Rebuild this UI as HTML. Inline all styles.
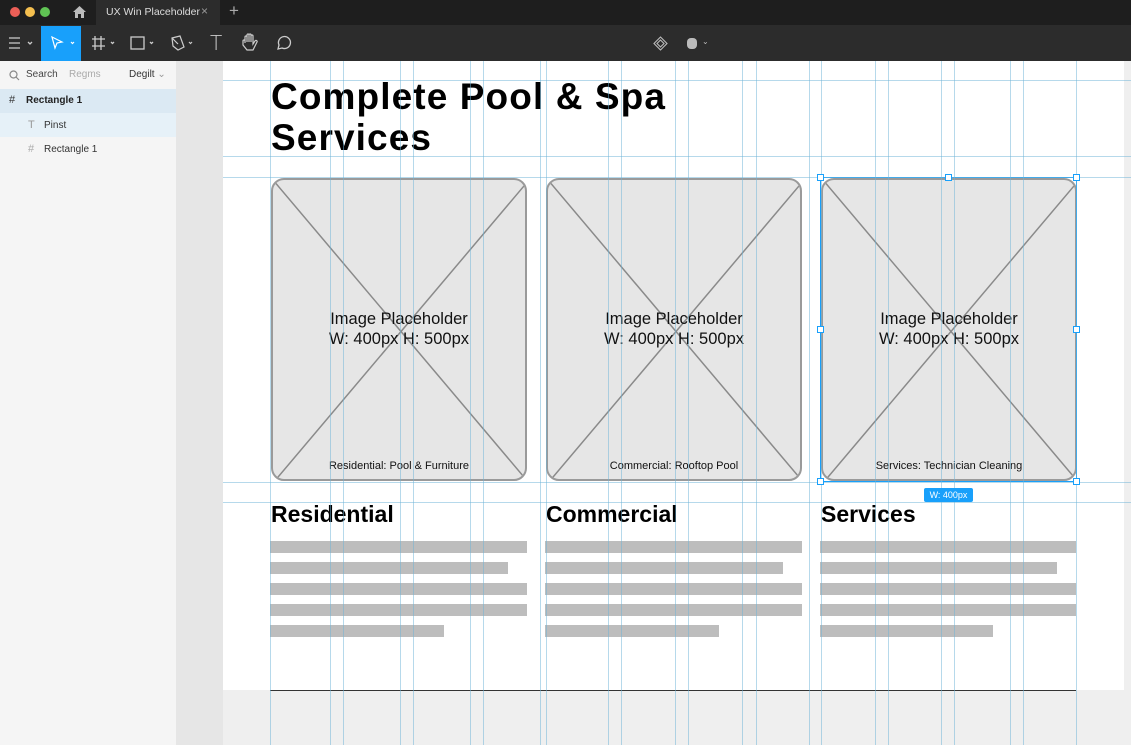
<!DOCTYPE html>
<html><head><meta charset="utf-8"><style>
*{margin:0;padding:0;box-sizing:border-box}
body{width:1131px;height:745px;overflow:hidden;position:relative;background:#efefef;font-family:"Liberation Sans",sans-serif}
.a{position:absolute}
.vl{position:absolute;top:61px;height:684px;width:1px;background:rgba(110,180,215,.5)}
.hl{position:absolute;left:223px;width:908px;height:1px;background:rgba(110,180,215,.5)}
.card{position:absolute;top:178px;width:256px;height:303px;background:#e6e6e6;border:2.5px solid #9a9a9a;border-radius:13px;overflow:hidden}
.card svg{position:absolute;left:0;top:0}
.ph{position:absolute;left:0;right:0;top:129px;text-align:center;font-size:16.5px;line-height:20px;color:#111}
.cap{position:absolute;left:0;right:0;bottom:7px;text-align:center;font-size:11px;color:#111}
.h2{position:absolute;top:501px;font-size:23px;font-weight:bold;color:#000}
.bar{position:absolute;height:12px;background:#bdbdbd}
</style></head><body>
<div class="a" style="left:0;top:0;width:1131px;height:25px;background:#1e1e1e"></div>
<div class="a" style="left:10px;top:7px;width:10px;height:10px;border-radius:50%;background:#ec5f57"></div>
<div class="a" style="left:25px;top:7px;width:10px;height:10px;border-radius:50%;background:#f4bf4f"></div>
<div class="a" style="left:40px;top:7px;width:10px;height:10px;border-radius:50%;background:#60c454"></div>
<svg class="a" style="left:72px;top:5px" width="15" height="14"><path d="M1 7L7.5 1 14 7H12V13H9V9H6V13H3V7Z" fill="#bbb"/></svg>
<div class="a" style="left:96px;top:0;width:124px;height:25px;background:#2c2c2c"></div>
<div class="a" style="left:106px;top:6px;font-size:10.5px;color:#ddd">UX Win Placeholder</div>
<div class="a" style="left:201px;top:4px;font-size:12px;color:#999">×</div>
<div class="a" style="left:229px;top:1px;font-size:17px;color:#aaa">+</div>
<div class="a" style="left:0;top:25px;width:1131px;height:36px;background:#2c2c2c"></div>
<svg class="a" style="left:8px;top:36px" width="26" height="14" fill="none" stroke="#ccc" stroke-width="1.3"><path d="M1 2H12M1 7H12M1 12H12M20 6L22 8 24 6"/></svg>
<div class="a" style="left:41px;top:26px;width:40px;height:35px;background:#18a0fb"></div>
<svg class="a" style="left:50px;top:36px" width="28" height="14" fill="none" stroke="#fff" stroke-width="1.2"><path d="M2 1L12 6 7 7 5 12Z M21 6L22.5 7.5 24 6"/></svg>
<svg class="a" style="left:91px;top:35px" width="28" height="16" fill="none" stroke="#ccc" stroke-width="1.3"><path d="M4 1V15M10 1V15M1 4H14M1 11H14M20 7L21.5 8.5 23 7"/></svg>
<svg class="a" style="left:130px;top:35px" width="28" height="16" fill="none" stroke="#ccc" stroke-width="1.3"><rect x="1" y="2" width="13" height="12"/><path d="M20 7L21.5 8.5 23 7"/></svg>
<svg class="a" style="left:170px;top:35px" width="28" height="16" fill="none" stroke="#ccc" stroke-width="1.2"><path d="M2 3L10 1 14 12 8 15 3 11Z M2 3L8 9M19 7L20.5 8.5 22 7"/></svg>
<div class="a" style="left:210px;top:31px;font-size:20px;color:#ccc;font-family:'DejaVu Sans',sans-serif;font-weight:200">T</div>
<svg class="a" style="left:241px;top:33px" width="18" height="19" fill="none" stroke="#ccc" stroke-width="1.2"><path d="M4 10V4a1 1 0 0 1 2 0V9V2a1 1 0 0 1 2 0V9V2a1 1 0 0 1 2 0V9V3a1 1 0 0 1 2 0V11L14 8a1 1 0 0 1 2 1L12 17H6L2 12V8a1 1 0 0 1 2 0"/></svg>
<svg class="a" style="left:275px;top:35px" width="18" height="17" fill="none" stroke="#ccc" stroke-width="1.3"><path d="M3 14L4 10A6 6 0 1 1 7 13Z"/></svg>
<svg class="a" style="left:653px;top:36px" width="15" height="15" fill="none" stroke="#bbb" stroke-width="1.1"><path d="M7.5 1L14 7.5 7.5 14 1 7.5Z M7.5 4L11 7.5 7.5 11 4 7.5Z"/></svg>
<div class="a" style="left:687px;top:38px;width:10px;height:11px;border-radius:4px;background:#bbb"></div>
<div class="a" style="left:702px;top:37px;font-size:8px;color:#bbb">⌄</div>
<div class="a" style="left:0;top:61px;width:176px;height:684px;background:#f5f5f5"></div>
<div class="a" style="left:176px;top:61px;width:47px;height:684px;background:#e6e6e6"></div>
<svg class="a" style="left:9px;top:70px" width="11" height="11" fill="none" stroke="#888" stroke-width="1.2"><circle cx="4.5" cy="4.5" r="3.5"/><path d="M7 7L10 10"/></svg>
<div class="a" style="left:26px;top:69px;font-size:10px;color:#444">Search</div>
<div class="a" style="left:69px;top:69px;font-size:10px;color:#aaa">Regms</div>
<div class="a" style="left:129px;top:69px;font-size:10px;color:#333">Degilt <span style="color:#999">⌄</span></div>
<div class="a" style="left:0;top:89px;width:176px;height:24px;background:#dbe9f3"></div>
<div class="a" style="left:0;top:113px;width:176px;height:24px;background:#e6f1f8"></div>
<div class="a" style="left:9px;top:94px;font-size:11px;color:#333">#</div>
<div class="a" style="left:26px;top:95px;font-size:10px;font-weight:bold;color:#222">Rectangle 1</div>
<div class="a" style="left:28px;top:119px;font-size:11px;color:#999">T</div>
<div class="a" style="left:44px;top:120px;font-size:10px;color:#333">Pinst</div>
<div class="a" style="left:28px;top:143px;font-size:11px;color:#aaa">#</div>
<div class="a" style="left:44px;top:144px;font-size:10px;color:#333">Rectangle 1</div>
<div class="a" style="left:223px;top:61px;width:901px;height:629px;background:#fff"></div>
<div class="a" style="left:270px;top:690px;width:806px;height:1px;background:#333"></div>
<div class="a" style="left:271px;top:76px;font-size:37px;line-height:41px;font-weight:bold;color:#000;letter-spacing:1.1px">Complete Pool &amp; Spa<br>Services</div>

<div class="card" style="left:271px"><svg width="256" height="303"><path d="M0 0L256 303M256 0L0 303" stroke="#8a8a8a" stroke-width="1.5"/></svg><div class="ph">Image Placeholder<br>W: 400px H: 500px</div><div class="cap">Residential: Pool &amp; Furniture</div></div>
<div class="card" style="left:546px"><svg width="256" height="303"><path d="M0 0L256 303M256 0L0 303" stroke="#8a8a8a" stroke-width="1.5"/></svg><div class="ph">Image Placeholder<br>W: 400px H: 500px</div><div class="cap">Commercial: Rooftop Pool</div></div>
<div class="card" style="left:821px"><svg width="256" height="303"><path d="M0 0L256 303M256 0L0 303" stroke="#8a8a8a" stroke-width="1.5"/></svg><div class="ph">Image Placeholder<br>W: 400px H: 500px</div><div class="cap">Services: Technician Cleaning</div></div>
<div class="a" style="left:820px;top:177px;width:257px;height:305px;border:1px solid #18a0fb"></div>

<div class="h2" style="left:271px">Residential</div>
<div class="h2" style="left:546px">Commercial</div>
<div class="h2" style="left:821px">Services</div>

<div class="bar" style="left:270px;top:541px;width:257px"></div><div class="bar" style="left:270px;top:562px;width:238px"></div><div class="bar" style="left:270px;top:583px;width:257px"></div><div class="bar" style="left:270px;top:604px;width:257px"></div><div class="bar" style="left:270px;top:625px;width:174px"></div>
<div class="bar" style="left:545px;top:541px;width:257px"></div><div class="bar" style="left:545px;top:562px;width:238px"></div><div class="bar" style="left:545px;top:583px;width:257px"></div><div class="bar" style="left:545px;top:604px;width:257px"></div><div class="bar" style="left:545px;top:625px;width:174px"></div>
<div class="bar" style="left:820px;top:541px;width:256px"></div><div class="bar" style="left:820px;top:562px;width:237px"></div><div class="bar" style="left:820px;top:583px;width:256px"></div><div class="bar" style="left:820px;top:604px;width:256px"></div><div class="bar" style="left:820px;top:625px;width:173px"></div>

<div class="vl" style="left:270px"></div><div class="vl" style="left:330px"></div><div class="vl" style="left:343px"></div><div class="vl" style="left:400px"></div><div class="vl" style="left:413px"></div><div class="vl" style="left:470px"></div><div class="vl" style="left:483px"></div><div class="vl" style="left:540px"></div><div class="vl" style="left:546px"></div><div class="vl" style="left:608px"></div><div class="vl" style="left:621px"></div><div class="vl" style="left:675px"></div><div class="vl" style="left:688px"></div><div class="vl" style="left:742px"></div><div class="vl" style="left:756px"></div><div class="vl" style="left:809px"></div><div class="vl" style="left:821px"></div><div class="vl" style="left:875px"></div><div class="vl" style="left:888px"></div><div class="vl" style="left:941px"></div><div class="vl" style="left:954px"></div><div class="vl" style="left:1010px"></div><div class="vl" style="left:1023px"></div><div class="vl" style="left:1076px"></div>
<div class="hl" style="top:80px"></div><div class="hl" style="top:156px"></div><div class="hl" style="top:177px"></div><div class="hl" style="top:482px"></div><div class="hl" style="top:502px"></div>

<div class="a" style="left:817px;top:174px;width:7px;height:7px;background:#fff;border:1px solid #18a0fb"></div>
<div class="a" style="left:945px;top:174px;width:7px;height:7px;background:#fff;border:1px solid #18a0fb"></div>
<div class="a" style="left:1073px;top:174px;width:7px;height:7px;background:#fff;border:1px solid #18a0fb"></div>
<div class="a" style="left:817px;top:326px;width:7px;height:7px;background:#fff;border:1px solid #18a0fb"></div>
<div class="a" style="left:1073px;top:326px;width:7px;height:7px;background:#fff;border:1px solid #18a0fb"></div>
<div class="a" style="left:817px;top:478px;width:7px;height:7px;background:#fff;border:1px solid #18a0fb"></div>
<div class="a" style="left:1073px;top:478px;width:7px;height:7px;background:#fff;border:1px solid #18a0fb"></div>
<div class="a" style="left:924px;top:488px;width:49px;height:14px;background:#18a0fb;border-radius:2px;color:#fff;font-size:9px;line-height:14px;text-align:center">W: 400px</div>
</body></html>
